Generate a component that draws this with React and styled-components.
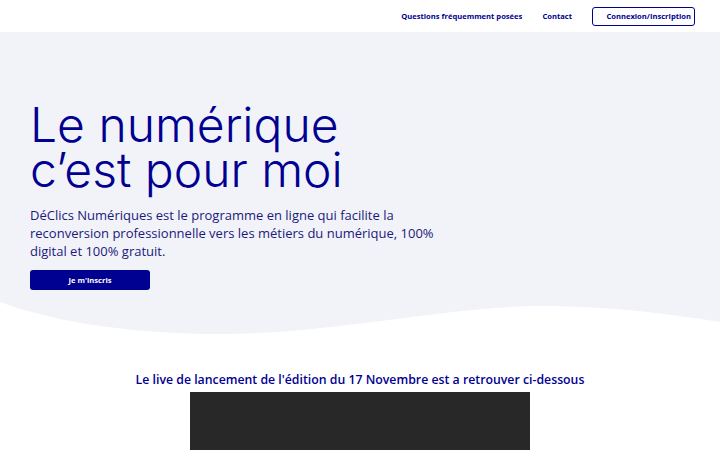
import React from "react";
import styled, { createGlobalStyle } from "styled-components";

const GlobalStyle = createGlobalStyle`
  body {
    margin: 0;
    background: #fff;
    font-family: "Open Sans", "Liberation Sans", sans-serif;
  }
`;

const NAVY = "#000091";

const App = () => {
  return (
    <>
      <GlobalStyle />
      <StHeader>
        <StNavLink>Questions fréquemment posées</StNavLink>
        <StNavLink>Contact</StNavLink>
        <StLoginButton>Connexion/Inscription</StLoginButton>
      </StHeader>
      <StHero>
        <StHeroContent>
          <StTitle>
            Le numérique
            <br />
            c’est pour moi
          </StTitle>
          <StLead>
            DéClics Numériques est le programme en ligne qui facilite la
            reconversion professionnelle vers les métiers du numérique, 100%
            digital et 100% gratuit.
          </StLead>
          <StCta>Je m'inscris</StCta>
        </StHeroContent>
        <StWave viewBox="0 0 720 40" preserveAspectRatio="none">
          <path
            d="M0 0 C60 22 140 32 220 32 C330 32 450 4 540 4 C620 4 680 14 720 20 L720 40 L0 40 Z"
            fill="#fff"
          />
        </StWave>
      </StHero>
      <StLive>
        <StLiveTitle>
          Le live de lancement de l'édition du 17 Novembre est a retrouver
          ci-dessous
        </StLiveTitle>
        <StVideo />
      </StLive>
    </>
  );
};

export default App;

const StHeader = styled.header`
  height: 32px;
  display: flex;
  align-items: center;
  justify-content: flex-end;
  gap: 20px;
  padding-right: 25px;
  background: #fff;
`;

const StNavLink = styled.a`
  font-size: 7.6px;
  font-weight: 700;
  color: ${NAVY};
  cursor: pointer;
`;

const StLoginButton = styled.button`
  height: 19px;
  width: 103px;
  padding: 0 3px 0 14px;
  display: flex;
  align-items: center;
  justify-content: flex-end;
  border: 1px solid ${NAVY};
  border-radius: 3px;
  background: #fff;
  color: ${NAVY};
  font-family: inherit;
  font-size: 7.6px;
  font-weight: 700;
  cursor: pointer;
`;

const StHero = styled.section`
  position: relative;
  background: #f2f2f9;
  padding-bottom: 40px;
`;

const StHeroContent = styled.div`
  padding: 70px 30px 12px;
`;

const StTitle = styled.h1`
  margin: 0;
  font-family: "Inter", sans-serif;
  font-weight: 300;
  font-size: 48px;
  line-height: 45px;
  color: ${NAVY};
`;

const StLead = styled.p`
  margin: 14px 0 6px;
  width: 410px;
  font-size: 13px;
  line-height: 18px;
  color: #1a1a7a;
`;

const StCta = styled.button`
  width: 120px;
  height: 20px;
  border: none;
  border-radius: 3px;
  background: ${NAVY};
  color: #fff;
  font-family: inherit;
  font-size: 7.6px;
  font-weight: 700;
  cursor: pointer;
`;

const StWave = styled.svg`
  position: absolute;
  left: 0;
  bottom: 0;
  width: 100%;
  height: 40px;
  display: block;
`;

const StLive = styled.section`
  display: flex;
  flex-direction: column;
  align-items: center;
  padding-top: 29px;
`;

const StLiveTitle = styled.h2`
  margin: 0 0 4px;
  font-size: 12.3px;
  font-weight: 600;
  color: ${NAVY};
`;

const StVideo = styled.div`
  width: 340px;
  height: 191px;
  background: #282828;
`;
